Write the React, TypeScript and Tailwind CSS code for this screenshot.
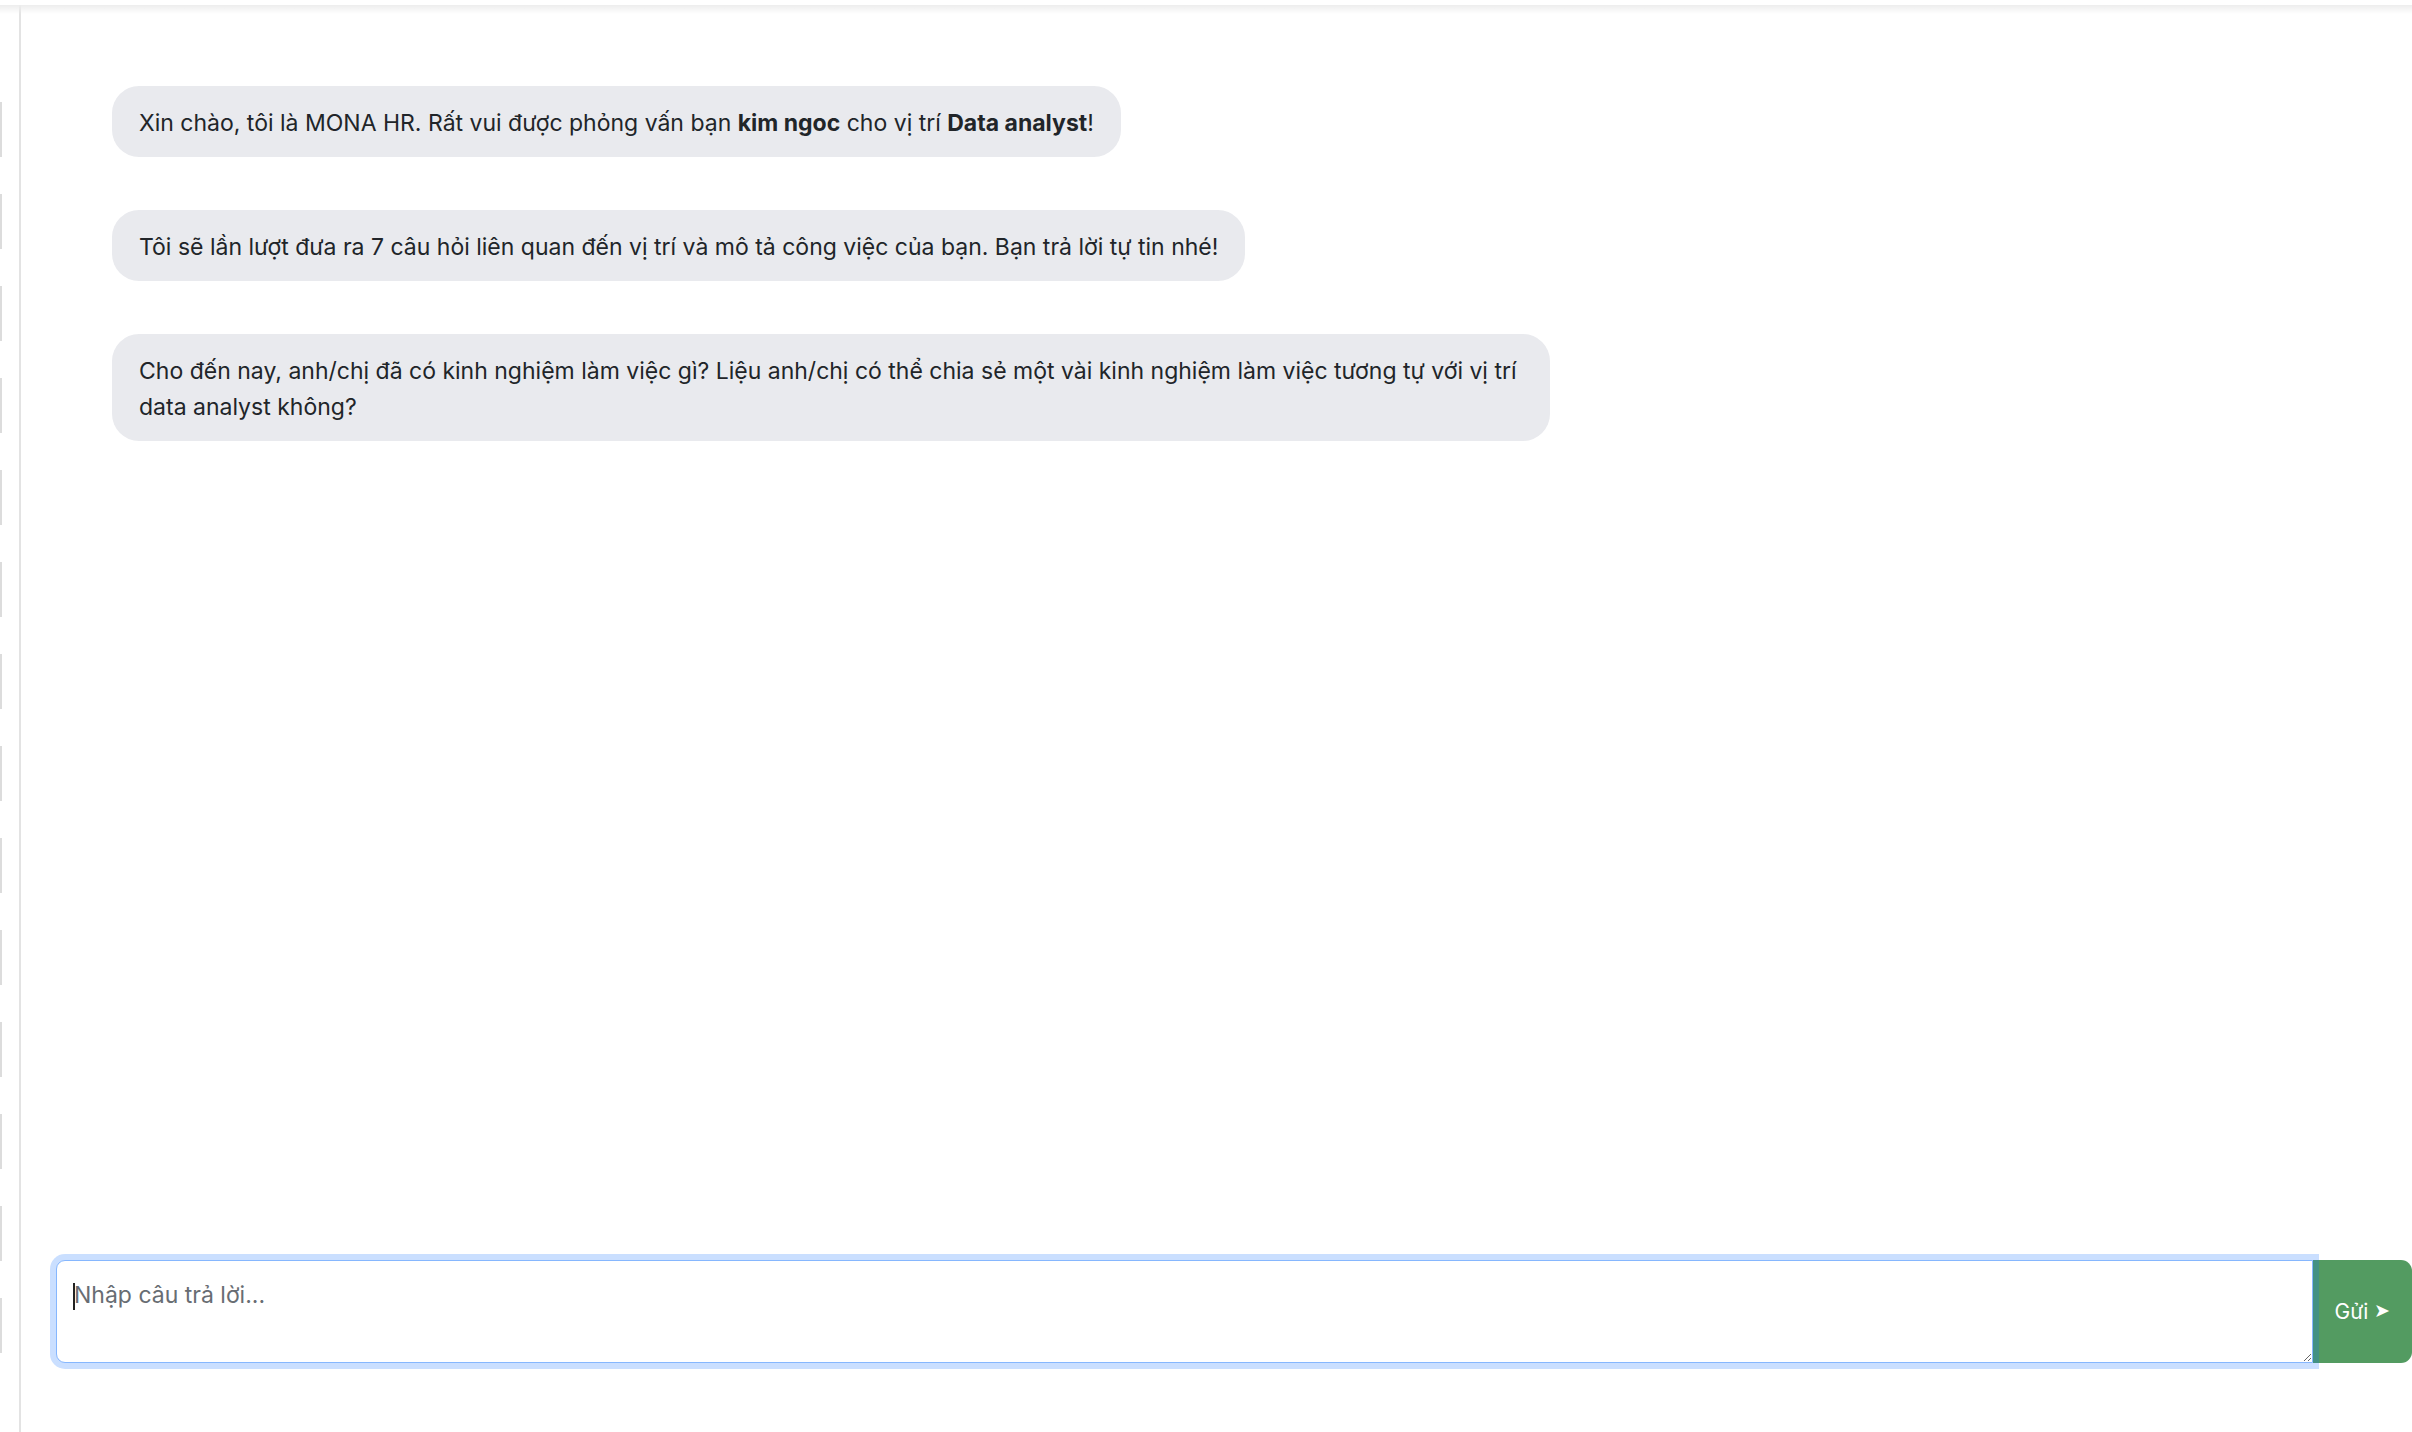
const marks = Array.from({ length: 14 });

function Bubble({ children }: { children: React.ReactNode }) {
  return (
    <div className="max-w-[1438px] bg-[#e9eaee] text-[#212529] rounded-[27px] px-[27px] pt-[19px] pb-[16px] text-[23px] leading-[36px]">
      {children}
    </div>
  );
}

export default function App() {
  return (
    <div className="relative h-screen w-full bg-white pt-[5px] font-['Inter',_'Noto_Sans',_sans-serif] overflow-hidden">
      {/* top shadow */}
      <div className="absolute left-0 right-0 top-[5px] h-[9px] bg-gradient-to-b from-[#ededed] to-white/0 pointer-events-none z-10" />

      <div className="flex h-full">
        {/* left strip */}
        <div className="w-[19px] flex flex-col gap-[37px] pt-[97px]">
          {marks.map((_, i) => (
            <div key={i} className="w-[2px] h-[55px] bg-[#dcdcdc]" />
          ))}
        </div>

        <div className="flex-1 border-l-2 border-[#e3e3e3] flex flex-col">
          {/* messages */}
          <div className="flex-1 pt-[81px] pl-[91px] flex flex-col items-start gap-[53px]">
            <Bubble>
              Xin chào, tôi là MONA HR. Rất vui được phỏng vấn bạn <b className="font-bold">kim ngoc</b> cho vị trí{" "}
              <b className="font-bold">Data analyst</b>!
            </Bubble>
            <Bubble>
              Tôi sẽ lần lượt đưa ra 7 câu hỏi liên quan đến vị trí và mô tả công việc của bạn. Bạn trả lời tự tin nhé!
            </Bubble>
            <Bubble>
              Cho đến nay, anh/chị đã có kinh nghiệm làm việc gì? Liệu anh/chị có thể chia sẻ một vài kinh nghiệm làm việc tương tự với vị trí data analyst không?
            </Bubble>
          </div>

          {/* input */}
          <div className="flex pl-[35px] pb-[69px]">
            <div className="relative flex-1 z-10">
              <textarea
                placeholder="Nhập câu trả lời..."
                className="block w-full h-[103px] rounded-l-[9px] border-[1.5px] border-[#86b7fe] bg-white px-[17px] pt-[16px] pb-[8px] text-[23px] leading-[36px] text-[#212529] placeholder:text-[#686d73] outline-none shadow-[0_0_0_6px_rgba(13,110,253,0.22)]"
              />
              <span className="absolute left-[17px] top-[23px] w-[2px] h-[27px] bg-[#222]" />
            </div>
            <button className="w-[99px] h-[103px] bg-[#539b61] text-white text-[21px] rounded-r-[11px] flex items-center justify-center gap-[6px]">
              Gửi <span className="text-[19px]">➤</span>
            </button>
          </div>
        </div>
      </div>
    </div>
  );
}
